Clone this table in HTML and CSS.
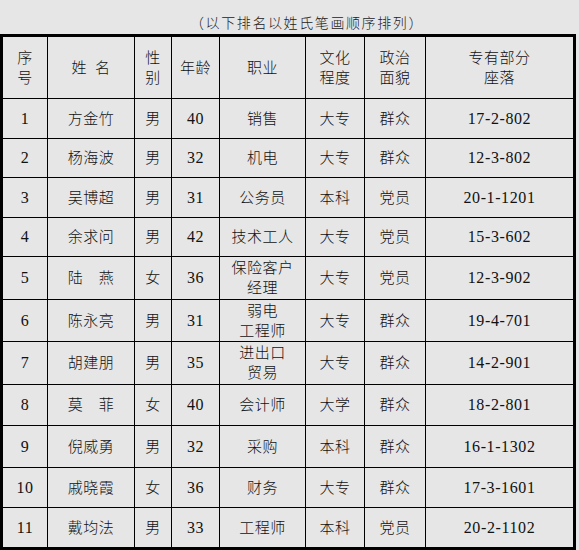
FILE: index.html
```html
<!DOCTYPE html>
<html lang="zh-CN">
<head>
<meta charset="utf-8">
<title>排名表</title>
<link rel="stylesheet" href="styles.css">
</head>
<body>
<div class="page">
  <p class="caption">（以下排名以姓氏笔画顺序排列）</p>
  <div class="sheet">
    <div class="row head">
      <div class="cell">序<br>号</div>
      <div class="cell">姓&ensp;名</div>
      <div class="cell">性<br>别</div>
      <div class="cell">年龄</div>
      <div class="cell">职业</div>
      <div class="cell">文化<br>程度</div>
      <div class="cell">政治<br>面貌</div>
      <div class="cell last">专有部分<br>座落</div>
    </div>
    <div class="row r40">
      <div class="cell num">1</div><div class="cell">方金竹</div><div class="cell">男</div><div class="cell num">40</div><div class="cell">销售</div><div class="cell">大专</div><div class="cell">群众</div><div class="cell num last">17-2-802</div>
    </div>
    <div class="row r39">
      <div class="cell num">2</div><div class="cell">杨海波</div><div class="cell">男</div><div class="cell num">32</div><div class="cell">机电</div><div class="cell">大专</div><div class="cell">群众</div><div class="cell num last">12-3-802</div>
    </div>
    <div class="row r40">
      <div class="cell num">3</div><div class="cell">吴博超</div><div class="cell">男</div><div class="cell num">31</div><div class="cell">公务员</div><div class="cell">本科</div><div class="cell">党员</div><div class="cell num last">20-1-1201</div>
    </div>
    <div class="row r39">
      <div class="cell num">4</div><div class="cell">余求问</div><div class="cell">男</div><div class="cell num">42</div><div class="cell">技术工人</div><div class="cell">大专</div><div class="cell">党员</div><div class="cell num last">15-3-602</div>
    </div>
    <div class="row r43">
      <div class="cell num">5</div><div class="cell">陆　燕</div><div class="cell">女</div><div class="cell num">36</div><div class="cell">保险客户<br>经理</div><div class="cell">大专</div><div class="cell">党员</div><div class="cell num last">12-3-902</div>
    </div>
    <div class="row r42">
      <div class="cell num">6</div><div class="cell">陈永亮</div><div class="cell">男</div><div class="cell num">31</div><div class="cell">弱电<br>工程师</div><div class="cell">大专</div><div class="cell">群众</div><div class="cell num last">19-4-701</div>
    </div>
    <div class="row r43">
      <div class="cell num">7</div><div class="cell">胡建朋</div><div class="cell">男</div><div class="cell num">35</div><div class="cell">进出口<br>贸易</div><div class="cell">大专</div><div class="cell">群众</div><div class="cell num last">14-2-901</div>
    </div>
    <div class="row r41">
      <div class="cell num">8</div><div class="cell">莫　菲</div><div class="cell">女</div><div class="cell num">40</div><div class="cell">会计师</div><div class="cell">大学</div><div class="cell">群众</div><div class="cell num last">18-2-801</div>
    </div>
    <div class="row r42">
      <div class="cell num">9</div><div class="cell">倪威勇</div><div class="cell">男</div><div class="cell num">32</div><div class="cell">采购</div><div class="cell">本科</div><div class="cell">群众</div><div class="cell num last">16-1-1302</div>
    </div>
    <div class="row r40">
      <div class="cell num">10</div><div class="cell">戚晓霞</div><div class="cell">女</div><div class="cell num">36</div><div class="cell">财务</div><div class="cell">大专</div><div class="cell">群众</div><div class="cell num last">17-3-1601</div>
    </div>
    <div class="row r39 end">
      <div class="cell num">11</div><div class="cell">戴均法</div><div class="cell">男</div><div class="cell num">33</div><div class="cell">工程师</div><div class="cell">本科</div><div class="cell">党员</div><div class="cell num last">20-2-1102</div>
    </div>
  </div>
</div>
</body>
</html>
```

FILE: styles.css
```css
html, body {
  margin: 0;
  padding: 0;
  background: #e6e6e6;
}

.page {
  width: 579px;
  height: 550px;
  overflow: hidden;
  font-family: "Liberation Serif", "Noto Sans CJK SC", serif;
  color: #111;
}

.caption {
  margin: 0;
  padding: 14px 0 0 190px;
  height: 20px;
  font-size: 14px;
  line-height: 20px;
  font-weight: 300;
  letter-spacing: 1.6px;
  color: #222;
}

.sheet {
  width: 576px;
  box-sizing: border-box;
  border: 3px solid #000;
  display: flex;
  flex-direction: column;
}

.row {
  display: grid;
  grid-template-columns: 45px 87px 37px 48px 86px 59px 61px 147px;
  border-bottom: 1px solid #000;
  box-sizing: border-box;
}

.row.end {
  border-bottom: none;
}

.head { height: 62px; }
.r39 { height: 39px; }
.r40 { height: 40px; }
.r41 { height: 41px; }
.r42 { height: 42px; }
.r43 { height: 43px; }
.end { height: 39px; }

.cell {
  display: flex;
  align-items: center;
  justify-content: center;
  text-align: center;
  border-right: 1px solid #000;
  box-sizing: border-box;
  font-size: 15px;
  line-height: 20px;
  font-weight: 300;
  letter-spacing: 0.5px;
  white-space: nowrap;
}

.cell.last {
  border-right: none;
}

.cell.num {
  font-size: 16px;
  font-weight: 400;
  letter-spacing: 0.6px;
}
```
